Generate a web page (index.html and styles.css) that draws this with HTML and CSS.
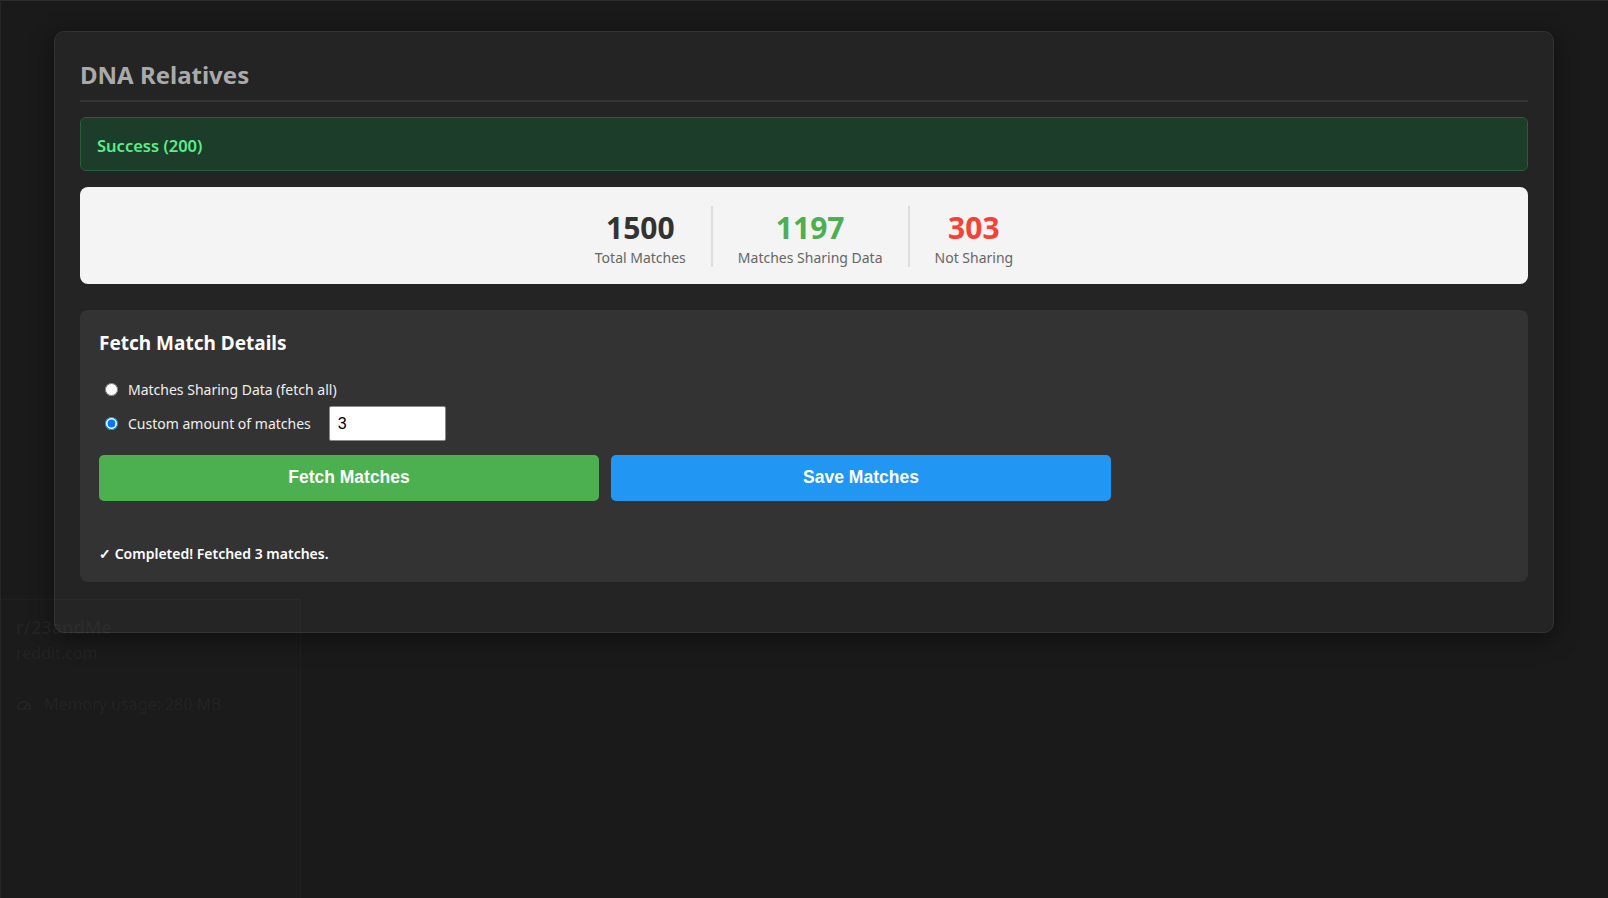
FILE: index.html
```html
<!DOCTYPE html>
<html>
<head>
<meta charset="utf-8">
<title>DNA Relatives</title>
<link rel="stylesheet" href="styles.css">
</head>
<body>
<div class="modal">
  <h2 class="modal-title">DNA Relatives</h2>
  <div class="status-ok">Success (200)</div>

  <div class="stats">
    <div class="stat">
      <div class="stat-num">1500</div>
      <div class="stat-label">Total Matches</div>
    </div>
    <div class="stat">
      <div class="stat-num green">1197</div>
      <div class="stat-label">Matches Sharing Data</div>
    </div>
    <div class="stat">
      <div class="stat-num red">303</div>
      <div class="stat-label">Not Sharing</div>
    </div>
  </div>

  <div class="fetch">
    <h3 class="fetch-title">Fetch Match Details</h3>
    <label class="opt">
      <input type="radio" name="mode" class="radio">
      <span>Matches Sharing Data (fetch all)</span>
    </label>
    <label class="opt">
      <input type="radio" name="mode" class="radio" checked>
      <span>Custom amount of matches</span>
      <input type="text" class="amount" value="3">
    </label>
    <div class="buttons">
      <button class="btn btn-fetch">Fetch Matches</button>
      <button class="btn btn-save">Save Matches</button>
    </div>
    <div class="done">✓ Completed! Fetched 3 matches.</div>
  </div>
</div>

<div class="hovercard">
  <div class="hc-title">r/23andMe</div>
  <div class="hc-site">reddit.com</div>
  <div class="hc-mem">
    <svg class="hc-icon" width="16" height="12" viewBox="0 0 16 12"><path d="M1.5 10.5a6.5 6.5 0 1 1 13 0" fill="none" stroke="currentColor" stroke-width="1.6"/><path d="M8 10.5l3.5-4" stroke="currentColor" stroke-width="1.6"/><path d="M1 11h14" stroke="currentColor" stroke-width="1.4"/></svg>
    <span>Memory usage: 280 MB</span>
  </div>
</div>
</body>
</html>
```

FILE: styles.css
```css
html, body {
  margin: 0;
  padding: 0;
}

body {
  width: 1608px;
  height: 898px;
  box-sizing: border-box;
  background: #1a1a1a;
  border-top: 1px solid #2c2c2c;
  border-left: 1px solid #262626;
  overflow: hidden;
  position: relative;
  font-family: "Noto Sans", "Open Sans", sans-serif;
}

.hovercard {
  position: absolute;
  left: 0;
  top: 598px;
  width: 300px;
  height: 299px;
  box-sizing: border-box;
  background: rgba(255, 255, 255, 0.008);
  border-top: 1px solid rgba(255, 255, 255, 0.02);
  border-right: 1px solid rgba(255, 255, 255, 0.02);
  padding: 14px 0 0 15px;
  color: rgba(255, 255, 255, 0.045);
  pointer-events: none;
}

.hc-title {
  font-size: 18px;
  font-weight: 600;
  line-height: 26px;
}

.hc-site {
  font-size: 16px;
  line-height: 26px;
}

.hc-mem {
  margin-top: 27px;
  display: flex;
  align-items: center;
  gap: 12px;
  font-size: 16px;
  line-height: 22px;
}

.hc-icon {
  color: inherit;
}

.modal {
  position: absolute;
  left: 53px;
  top: 30px;
  width: 1500px;
  box-sizing: border-box;
  background: #242424;
  border: 1px solid #333;
  border-radius: 10px;
  padding: 25px;
  box-shadow: 0 6px 24px rgba(0, 0, 0, 0.45);
}

.modal-title {
  margin: 0 0 15px;
  padding-top: 2px;
  padding-bottom: 9px;
  border-bottom: 2px solid #333;
  font-size: 24px;
  line-height: 32px;
  font-weight: 700;
  color: #aaaaaa;
}

.status-ok {
  background: #1b3d2a;
  border: 1px solid #2a5c3d;
  border-radius: 6px;
  padding: 17px 16px 13px;
  font-size: 16.5px;
  line-height: 22px;
  font-weight: 600;
  color: #57ef8a;
}

.stats {
  margin-top: 16px;
  background: #f4f4f4;
  border-radius: 8px;
  padding: 19px 20px 17px;
  display: flex;
  justify-content: center;
}

.stat {
  padding: 0 25px;
  text-align: center;
}

.stat + .stat {
  border-left: 2px solid #dddddd;
}

.stat-num {
  margin-top: 2px;
  font-size: 30px;
  line-height: 40px;
  font-weight: 700;
  color: #333333;
}

.stat-num.green {
  color: #4caf50;
}

.stat-num.red {
  color: #f44336;
}

.stat-label {
  font-size: 14px;
  line-height: 19px;
  color: #666666;
}

.fetch {
  margin-top: 26px;
  margin-bottom: 25px;
  background: #333333;
  border-radius: 8px;
  padding: 18px 18px 18px 19px;
  color: #ffffff;
}

.fetch-title {
  margin: 0;
  padding-top: 2px;
  font-size: 19px;
  line-height: 27px;
  font-weight: 700;
  color: #ffffff;
}

.opt {
  display: flex;
  align-items: center;
  font-size: 14px;
  color: #f0f0f0;
}

.opt:first-of-type {
  margin-top: 21px;
  height: 22px;
}

.opt + .opt {
  margin-top: 6px;
}

.radio {
  width: 13px;
  height: 13px;
  margin: 0 10px 0 6px;
  accent-color: #0075ff;
}

.amount {
  margin-left: 18px;
  width: 117px;
  height: 35px;
  box-sizing: border-box;
  padding: 0 8px;
  border: 1px solid #8a8a8a;
  border-radius: 2px;
  background: #ffffff;
  color: #000;
  font-family: "Liberation Sans", Arial, sans-serif;
  font-size: 16px;
  outline: none;
}

.buttons {
  margin-top: 14px;
  display: flex;
  gap: 12px;
}

.btn {
  width: 500px;
  height: 46px;
  padding: 0 0 2px;
  border: none;
  border-radius: 5px;
  color: #ffffff;
  font-family: "Liberation Sans", Arial, sans-serif;
  font-size: 17.5px;
  font-weight: 700;
  cursor: pointer;
}

.btn-fetch {
  background: #4caf50;
}

.btn-save {
  background: #2196f3;
}

.done {
  margin-top: 43px;
  font-size: 14px;
  line-height: 20px;
  font-weight: 600;
  color: #ffffff;
}
```
